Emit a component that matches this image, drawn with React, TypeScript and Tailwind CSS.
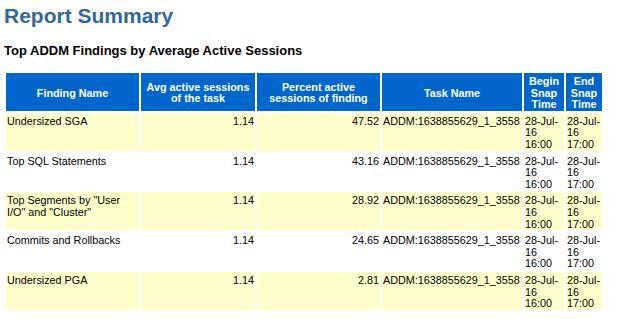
import React from 'react';

const findings = [
  { name: 'Undersized SGA', avg: '1.14', pct: '47.52' },
  { name: 'Top SQL Statements', avg: '1.14', pct: '43.16' },
  { name: 'Top Segments by "User I/O" and "Cluster"', avg: '1.14', pct: '28.92' },
  { name: 'Commits and Rollbacks', avg: '1.14', pct: '24.65' },
  { name: 'Undersized PGA', avg: '1.14', pct: '2.81' },
];

const TASK = 'ADDM:1638855629_1_3558';

export default function App() {
  return (
    <div className="min-h-screen bg-white px-[4px] pt-[4px] text-black" style={{ fontFamily: '"Liberation Sans", Arial, sans-serif' }}>
      <h2 className="text-[21px] font-bold leading-[24px] text-[#336699]">Report Summary</h2>
      <h3 className="mt-[15px] text-[13px] font-bold leading-[15px]">Top ADDM Findings by Average Active Sessions</h3>

      <table className="mt-[13px] w-[600px] table-fixed border-separate border-spacing-[2px] text-[10.8px] leading-[11.6px]">
        <thead>
          <tr className="bg-[#0066CC] font-bold text-white">
            <th className="w-[133px] px-px pt-[3px] pb-0 align-middle">Finding Name</th>
            <th className="w-[114px] px-px pt-[3px] pb-0 align-middle">Avg active sessions of the task</th>
            <th className="w-[123px] px-px pt-[3px] pb-0 align-middle">Percent active sessions of finding</th>
            <th className="w-[140px] px-px pt-[3px] pb-0 align-middle">Task Name</th>
            <th className="w-[40px] px-px pt-[3px] pb-0 align-middle">Begin Snap Time</th>
            <th className="w-[36px] px-px pt-[3px] pb-0 align-middle">End Snap Time</th>
          </tr>
        </thead>
        <tbody>
          {findings.map((f, i) => (
            <tr key={f.name} className={i % 2 === 0 ? 'bg-[#FFFFCC]' : 'bg-white'}>
              <td className="px-px pt-[3px] pb-0 align-top">{f.name}</td>
              <td className="px-px pt-[3px] pb-0 text-right align-top">{f.avg}</td>
              <td className="px-px pt-[3px] pb-0 text-right align-top">{f.pct}</td>
              <td className="px-px pt-[3px] pb-0 align-top">{TASK}</td>
              <td className="px-px pt-[3px] pb-0 align-top">28-Jul-<wbr />16 16:00</td>
              <td className="px-px pt-[3px] pb-0 align-top">28-Jul-<wbr />16 17:00</td>
            </tr>
          ))}
        </tbody>
      </table>
    </div>
  );
}
